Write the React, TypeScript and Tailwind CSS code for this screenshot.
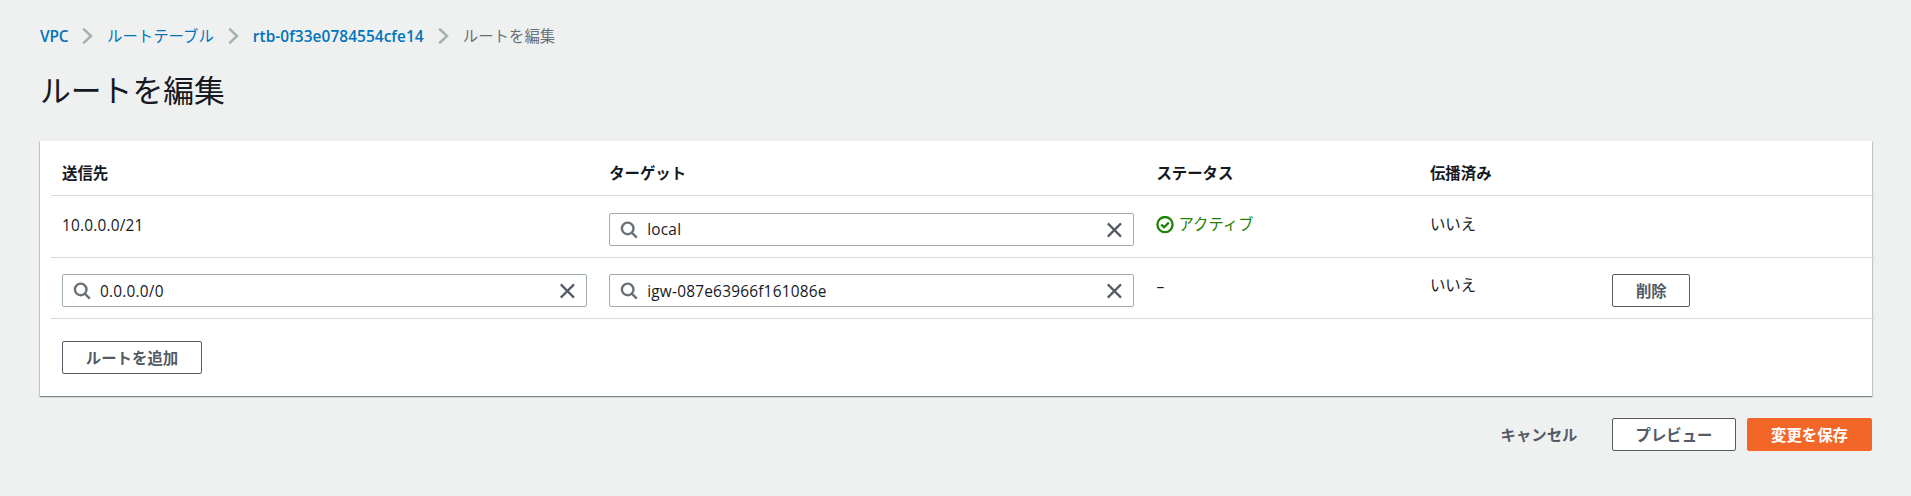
import type { ReactNode } from 'react';

const LATIN = "font-['Open_Sans','Noto_Sans_CJK_JP',sans-serif]";

function Chevron() {
  return (
    <svg className="mr-[14px] ml-[14px] h-[18px] w-[11px] shrink-0" viewBox="0 0 11 18" fill="none" stroke="#a5b1b2" strokeWidth="2.5">
      <path d="M1.2 1.6 9 9 1.2 16.4" />
    </svg>
  );
}

function SearchIcon() {
  return (
    <svg className="h-[18px] w-[18px] shrink-0" viewBox="0 0 18 18" fill="none" stroke="#687078" strokeWidth="2.4">
      <circle cx="7.7" cy="7.4" r="5.8" />
      <path d="m11.8 11.6 5 5" />
    </svg>
  );
}

function ClearIcon() {
  return (
    <svg className="h-[16px] w-[16px] shrink-0" viewBox="0 0 16 16" fill="none" stroke="#545b64" strokeWidth="2.2">
      <path d="m1.8 1.4 13.2 13.2M15 1.4 1.8 14.6" />
    </svg>
  );
}

function CheckIcon() {
  return (
    <svg className="h-[18px] w-[18px] shrink-0" viewBox="0 0 18 18" fill="none" stroke="#1d8102" strokeWidth="2.3">
      <circle cx="9" cy="8.6" r="7.6" />
      <path d="m5.2 8.6 2.9 2.6 4.7-4.6" />
    </svg>
  );
}

function Field({ value, offset = 'pt-px' }: { value: string; offset?: string }) {
  return (
    <div className="flex h-[33px] items-center rounded-[2px] border border-[#9fadae] bg-white pr-[11px] pl-[10px]">
      <SearchIcon />
      <span className={`ml-[9px] flex-1 font-medium tracking-[0.22px] ${offset}`}>{value}</span>
      <ClearIcon />
    </div>
  );
}

function Button({ children, className }: { children: ReactNode; className: string }) {
  return (
    <button className={`flex h-[33px] items-center justify-center rounded-[2px] border pt-[2px] font-bold whitespace-nowrap ${className}`}>
      {children}
    </button>
  );
}

const COLUMNS = 'grid h-full grid-cols-[30%_30%_15%_10%_15%]';

export default function App() {
  return (
    <div className={`h-[496px] w-[1911px] overflow-hidden bg-[#eff1f1] pt-[24px] pr-[39px] pl-[40px] text-[15.4px] leading-[24px] text-[#16191f] ${LATIN}`}>
      <nav className="flex h-[24px] items-center whitespace-nowrap text-[#0073bb]">
        <a className="w-[28px] pt-[2px] font-semibold tracking-[-0.2px]">VPC</a>
        <Chevron />
        <a className="pt-px">ルートテーブル</a>
        <Chevron />
        <a className="w-[171px] pt-[2px] font-semibold tracking-[0.07px]">rtb-0f33e0784554cfe14</a>
        <Chevron />
        <span className="pt-px text-[#687078]">ルートを編集</span>
      </nav>
      <h1 className="mt-[20px] h-[44px] text-[30.8px] leading-[44px]">ルートを編集</h1>

      <main className="mt-[29px] h-[255px] bg-white shadow-[0_1px_1px_0_rgba(0,28,36,0.3),1px_1px_1px_0_rgba(0,28,36,0.15),-1px_1px_1px_0_rgba(0,28,36,0.15)]">
        <div className="ml-[11px] w-[1824px]">
          <div className="h-[55px] border-b border-[#d5dbdb]">
            <div className={`${COLUMNS} pt-[21px] font-bold`}>
              <div className="px-[11px]">送信先</div>
              <div className="px-[11px]">ターゲット</div>
              <div className="px-[11px]">ステータス</div>
              <div className="px-[11px]">伝播済み</div>
            </div>
          </div>
          <div className="h-[62px] border-b border-[#d5dbdb]">
            <div className={`${COLUMNS} pt-[17px]`}>
              <div className="px-[11px] pt-px font-medium tracking-[0.2px]">10.0.0.0/21</div>
              <div className="px-[11px]"><Field value="local" /></div>
              <div className="flex h-[23px] items-center gap-[4px] px-[11px] text-[#1d8102]">
                <CheckIcon />
                アクティブ
              </div>
              <div className="px-[11px]">いいえ</div>
            </div>
          </div>
          <div className="h-[61px] border-b border-[#d5dbdb]">
            <div className={`${COLUMNS} pt-[16px]`}>
              <div className="px-[11px]"><Field value="0.0.0.0/0" offset="pt-[3px]" /></div>
              <div className="px-[11px]"><Field value="igw-087e63966f161086e" offset="pt-[3px]" /></div>
              <div className="px-[11px] pt-px">–</div>
              <div className="px-[11px]">いいえ</div>
              <div className="px-[11px]">
                <Button className="w-[78px] border-[#545b64] bg-white text-[#545b64]">削除</Button>
              </div>
            </div>
          </div>
        </div>
        <div className="pt-[22px] pl-[22px]">
          <Button className="w-[140px] border-[#545b64] bg-white text-[#545b64]">ルートを追加</Button>
        </div>
      </main>

      <footer className="mt-[22px] flex justify-end">
        <Button className="mr-[12px] w-[122px] border-transparent text-[#545b64]">キャンセル</Button>
        <Button className="mr-[11px] w-[124px] border-[#545b64] bg-white text-[#545b64]">プレビュー</Button>
        <Button className="w-[125px] border-[#f26727] bg-[#f26727] text-white">変更を保存</Button>
      </footer>
    </div>
  );
}
